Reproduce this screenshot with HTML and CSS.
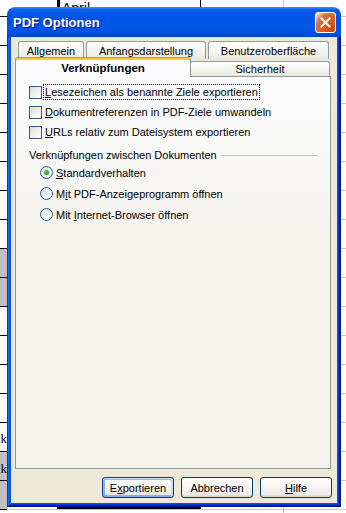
FILE: index.html
```html
<!DOCTYPE html>
<html lang="de">
<head>
  <meta charset="UTF-8">
  <meta name="viewport" content="width=device-width, initial-scale=1.0">
  <title>PDF Optionen</title>
  <link rel="stylesheet" href="styles.css">
</head>
<body>
<div class="desk">
    <div class="sheet">
        <div class="colA">
            <span class="cell k1">k</span>
            <span class="cell k2">k</span>
        </div>
        <div class="range"><span>April</span></div>
    </div>

    <div class="window">
        <div class="titlebar">
            <span class="title">PDF Optionen</span>
            <span class="close">
                <svg width="19" height="19" viewBox="0 0 19 19">
                    <path d="M5.5 5.5 L13.5 13.5 M13.5 5.5 L5.5 13.5" stroke="#fff" stroke-width="2" stroke-linecap="square"/>
                </svg>
            </span>
        </div>
        <div class="frame">
            <div class="client">
                <div class="tabs">
                    <div class="tabrow">
                        <div class="tab allg">Allgemein</div>
                        <div class="tab anf">Anfangsdarstellung</div>
                        <div class="tab ben">Benutzeroberfläche</div>
                    </div>
                    <div class="tabrow front">
                        <div class="tab active">Verknüpfungen</div>
                        <div class="tab sich">Sicherheit</div>
                    </div>
                </div>
                <div class="panel">
                    <div class="option">
                        <span class="check"></span>
                        <span class="text focus"><u>L</u>esezeichen als benannte Ziele exportieren</span>
                    </div>
                    <div class="option">
                        <span class="check"></span>
                        <span class="text"><u>D</u>okumentreferenzen in PDF-Ziele umwandeln</span>
                    </div>
                    <div class="option">
                        <span class="check"></span>
                        <span class="text"><u>U</u>RLs relativ zum Dateisystem exportieren</span>
                    </div>
                    <div class="group">
                        <span>Verknüpfungen zwischen Dokumenten</span>
                        <i></i>
                    </div>
                    <div class="option choice">
                        <span class="radio on"></span>
                        <span class="text"><u>S</u>tandardverhalten</span>
                    </div>
                    <div class="option choice">
                        <span class="radio"></span>
                        <span class="text">M<u>i</u>t PDF-Anzeigeprogramm öffnen</span>
                    </div>
                    <div class="option choice">
                        <span class="radio"></span>
                        <span class="text">Mit <u>I</u>nternet-Browser öffnen</span>
                    </div>
                </div>
                <div class="buttons">
                    <button class="btn default">E<u>x</u>portieren</button>
                    <button class="btn">Abbrechen</button>
                    <button class="btn"><u>H</u>ilfe</button>
                </div>
            </div>
        </div>
    </div>
</div>
</body>
</html>
```

FILE: styles.css
```css
body {
    margin: 0;
    font-family: "Liberation Sans", Arial, sans-serif;
    font-size: 11px;
    color: #000;
}
.desk {
    position: relative;
    width: 346px;
    height: 513px;
    overflow: hidden;
    background: #fff;
}
.sheet {
    position: absolute;
    inset: 0;
    background:
        linear-gradient(to right, transparent 283px, #c8c8c8 283px, #c8c8c8 284px, transparent 284px),
        linear-gradient(to bottom, #c8c8c8 1px, transparent 1px) 0 16px / 100% 29px;
}
.colA {
    position: absolute;
    left: 0;
    top: 0;
    width: 7px;
    height: 513px;
    overflow: hidden;
    background:
        linear-gradient(to bottom, #000 1px, transparent 1px) 0 16px / 100% 29px,
        linear-gradient(#c0c0c0, #c0c0c0) 0 248px / 100% 58px no-repeat,
        linear-gradient(#c0c0c0, #c0c0c0) 0 452px / 100% 58px no-repeat;
}
.cell {
    position: absolute;
    right: 0;
    font-family: "Liberation Serif", serif;
    font-size: 13px;
    line-height: 14px;
}
.k1 {
    top: 432px;
}
.k2 {
    top: 462px;
}
.range {
    position: absolute;
    left: 57px;
    top: -10px;
    width: 140px;
    height: 516px;
    border: 1px solid #000;
    border-left-width: 3px;
    border-bottom-width: 2px;
}
.range span {
    display: block;
    height: 7px;
    overflow: hidden;
    margin: 10px 0 0 2px;
    font-size: 14px;
    line-height: 15px;
}

.window {
    position: absolute;
    left: 7px;
    top: 7px;
    width: 334px;
    height: 500px;
    display: flex;
    flex-direction: column;
    border-radius: 8px 8px 0 0;
    overflow: hidden;
}
.titlebar {
    flex: none;
    height: 30px;
    display: flex;
    align-items: center;
    justify-content: space-between;
    padding: 0 5px 0 6px;
    background: linear-gradient(180deg, #3a8cff 0, #0a5deb 3px, #0054e3 9px, #0056e8 22px, #0050e0 27px, #003dd7 30px);
}
.title {
    color: #fff;
    font-weight: bold;
    font-size: 13px;
    text-shadow: 1px 1px #0f1089;
}
.close {
    width: 21px;
    height: 21px;
    box-sizing: border-box;
    border: 1px solid #fff;
    border-radius: 3px;
    display: flex;
    align-items: center;
    justify-content: center;
    background: radial-gradient(circle at 90% 90%, #cc4600 0, #dc6527 55%, #cd7546 70%, #ffccb2 90%, #fff 100%);
}
.frame {
    flex: 1;
    display: flex;
    padding: 0 4px 4px;
    background: #0855dd;
    box-shadow:
        inset 1px 0 #0831d9,
        inset -1px -1px #00138c,
        inset 2px 0 #166aee,
        inset -2px -2px #001ea0,
        inset 3px 0 #0855dd,
        inset -3px -3px #003bda;
}
.client {
    flex: 1;
    display: flex;
    flex-direction: column;
    padding: 4px 6px 0 4px;
    background: #ece9d8;
}

.tabs {
    flex: none;
}
.tabrow {
    display: flex;
    height: 18px;
    gap: 2px;
    padding-left: 3px;
}
.tabrow.front {
    height: 17px;
    gap: 0;
    padding-left: 0;
}
.tab {
    box-sizing: border-box;
    display: flex;
    align-items: center;
    justify-content: center;
    border: 1px solid #919b9c;
    border-bottom: none;
    border-radius: 3px 3px 0 0;
    background: linear-gradient(#fff, #f3f2ed 60%, #e8e7df);
}
.allg {
    width: 66px;
}
.anf {
    width: 120px;
}
.ben {
    width: 121px;
}
.active {
    position: relative;
    z-index: 1;
    width: 176px;
    height: 20px;
    margin-top: -2px;
    border-top-color: #e68b2c;
    box-shadow: inset 0 2px #ffc73c;
    background: #fcfcfe;
    font-weight: bold;
    font-size: 11.5px;
    padding-top: 1px;
}
.sich {
    width: 140px;
    height: 15px;
    margin-top: 2px;
    margin-left: -1px;
}

.panel {
    flex: 1;
    border: 1px solid #919b9c;
    background: linear-gradient(#fcfcfe, #f4f3ee 40%);
    padding: 5px 12px 0 13px;
}
.option {
    display: flex;
    align-items: center;
    height: 20px;
}
.choice {
    height: 21px;
    padding-left: 11px;
}
.check {
    width: 13px;
    height: 13px;
    box-sizing: border-box;
    border: 1px solid #2c5f8c;
    background: linear-gradient(135deg, #dcdcd7, #fff);
    margin-right: 2px;
}
.radio {
    width: 13px;
    height: 13px;
    box-sizing: border-box;
    border: 1px solid #2c5f8c;
    border-radius: 50%;
    background: linear-gradient(135deg, #dcdcd7, #fff);
    margin-right: 2px;
    display: flex;
    align-items: center;
    justify-content: center;
}
.radio.on::after {
    content: "";
    width: 5px;
    height: 5px;
    border-radius: 50%;
    background: radial-gradient(circle at 35% 35%, #5bd85a, #21a121 60%, #1a871a);
}
.text {
    padding: 0 1px;
    line-height: 14px;
}
.focus {
    outline: 1px dotted #000;
}
.group {
    display: flex;
    align-items: center;
    gap: 4px;
    height: 14px;
    margin-top: 6px;
}
.group i {
    flex: 1;
    height: 1px;
    background: #c4c4b8;
}

.buttons {
    flex: none;
    display: flex;
    justify-content: flex-end;
    gap: 7px;
    margin: 8px -1px 5px 0;
}
.btn {
    width: 72px;
    height: 21px;
    box-sizing: border-box;
    padding: 0;
    border: 1px solid #003c74;
    border-radius: 3px;
    background: linear-gradient(180deg, #fff, #ecebe6 86%, #d6d0c5);
    font: inherit;
    color: #000;
}
.default {
    box-shadow:
        inset -1px 1px #cee7ff,
        inset 1px 2px #98b8ea,
        inset -2px 2px #bcd4f6,
        inset 1px -1px #89ade4,
        inset 2px -2px #89ade4;
}
```
